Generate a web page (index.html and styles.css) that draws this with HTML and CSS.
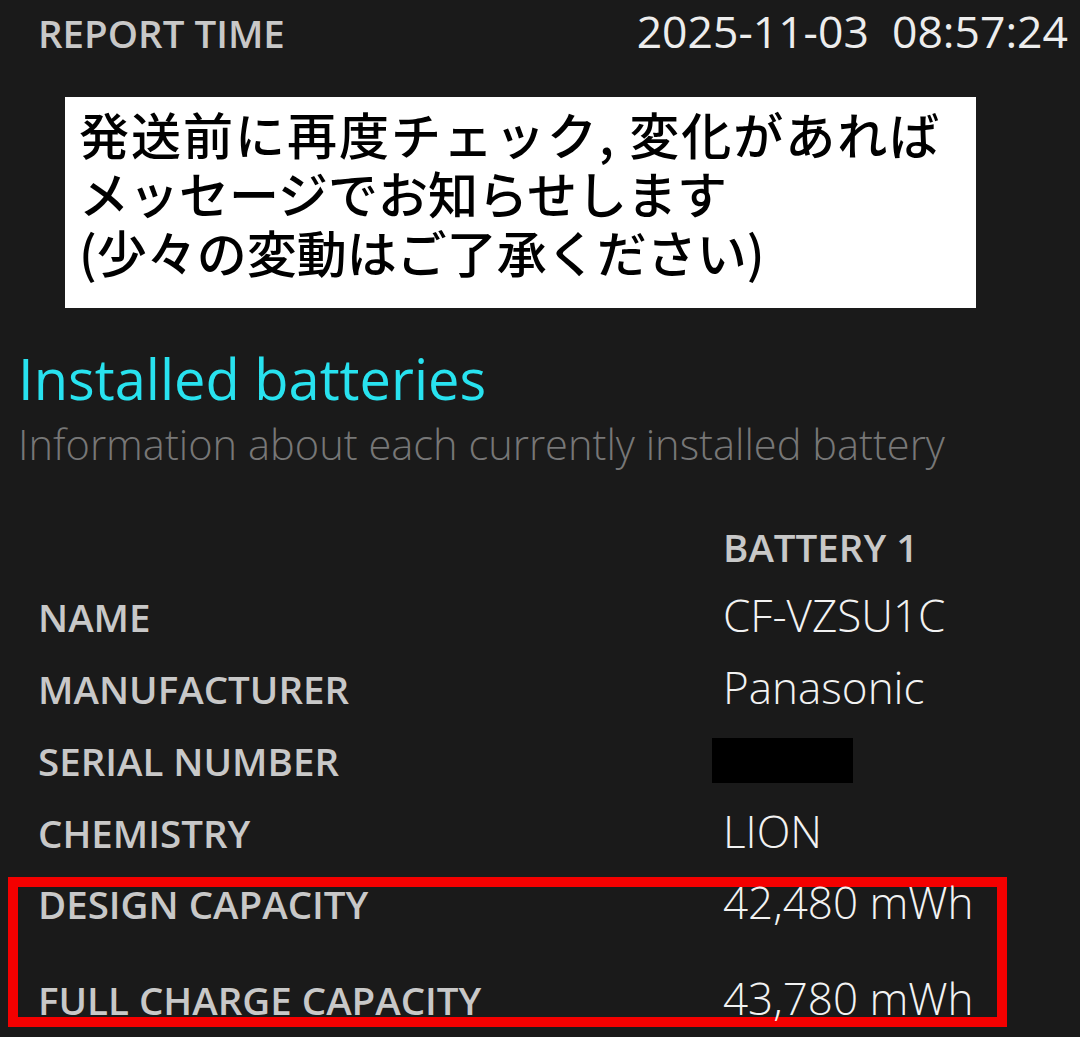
FILE: index.html
```html
<!DOCTYPE html>
<html lang="ja">
<head>
    <meta charset="UTF-8">
    <meta name="viewport" content="width=device-width, initial-scale=1.0">
    <title>Battery report</title>
    <link rel="stylesheet" href="styles.css">
</head>
<body>
    <!-- レポート時刻 -->
    <div class="report-time">
        <span class="label">REPORT TIME</span>
        <span class="time">2025-11-03&nbsp;&nbsp;08:57:24</span>
    </div>

    <!-- 注意書き -->
    <div class="notice">
        <span class="wide">発送前に再度チェック, 変化があれば</span><br>
        メッセージでお知らせします<br>
        (少々の変動はご了承ください)
    </div>

    <!-- バッテリー情報 -->
    <h1 class="section-title">Installed batteries</h1>
    <p class="section-sub">Information about each currently installed battery</p>

    <div class="battery-table">
        <div class="row head">
            <span class="label"></span>
            <span class="label">BATTERY 1</span>
        </div>
        <div class="row">
            <span class="label">NAME</span>
            <span class="value">CF-VZSU1C</span>
        </div>
        <div class="row">
            <span class="label">MANUFACTURER</span>
            <span class="value">Panasonic</span>
        </div>
        <div class="row">
            <span class="label">SERIAL NUMBER</span>
            <span class="value"><span class="redacted"></span></span>
        </div>
        <div class="row">
            <span class="label">CHEMISTRY</span>
            <span class="value">LION</span>
        </div>

        <!-- 容量 (赤枠) -->
        <div class="highlight">
            <div class="row design">
                <span class="label">DESIGN CAPACITY</span>
                <span class="value">42,480 mWh</span>
            </div>
            <div class="row full">
                <span class="label">FULL CHARGE CAPACITY</span>
                <span class="value">43,780 mWh</span>
            </div>
        </div>
    </div>
</body>
</html>
```

FILE: styles.css
```css
/* 基本 */
body {
    margin: 0;
    background-color: #1a1a1a;
    color: #ececec;
    font-family: 'Open Sans', 'Noto Sans CJK JP', sans-serif;
    overflow: hidden;
}

.label {
    font-weight: 600;
    color: #c8c8c8;
    font-size: 38.5px;
}

/* レポート時刻 */
.report-time {
    display: flex;
    justify-content: space-between;
    align-items: baseline;
    padding: 0 12px 0 38px;
    height: 97px;
    box-sizing: border-box;
}

.report-time .time {
    font-size: 44.5px;
    font-weight: 400;
    color: #ededed;
}

/* 注意書き */
.notice {
    margin-left: 65px;
    width: 911px;
    height: 211px;
    box-sizing: border-box;
    padding: 7px 14px;
    background: #ffffff;
    color: #000000;
    font-family: 'Noto Sans CJK JP', sans-serif;
    font-weight: 500;
    font-size: 50px;
    line-height: 59px;
}

.notice .wide {
    letter-spacing: 2px;
}

/* セクション見出し */
.section-title {
    margin: 38px 0 0 18px;
    font-size: 56px;
    font-weight: 400;
    line-height: 64px;
    color: #28e2ef;
}

.section-sub {
    margin: 6px 0 0 18px;
    font-size: 41.6px;
    font-weight: 300;
    line-height: 56px;
    color: #777777;
}

/* テーブル */
.battery-table {
    margin-top: 49px;
}

.row {
    display: grid;
    grid-template-columns: 685px 1fr;
    align-items: baseline;
    height: 72px;
    padding-left: 38px;
}

.row.head {
    height: 64px;
}

.row .value {
    font-size: 44px;
    font-weight: 300;
    color: #f2f2f2;
}

.redacted {
    display: inline-block;
    width: 141px;
    height: 45px;
    margin-left: -11px;
    background: #000000;
    vertical-align: -7px;
}

.highlight {
    margin-top: 4px;
    margin-left: 8px;
    width: 999px;
    box-sizing: border-box;
    border: 10px solid #f40000;
}

.highlight .row {
    padding-left: 20px;
}

.highlight .row.design {
    margin-top: -15px;
    height: 96px;
}

.highlight .row.full {
    height: 49px;
}
```
